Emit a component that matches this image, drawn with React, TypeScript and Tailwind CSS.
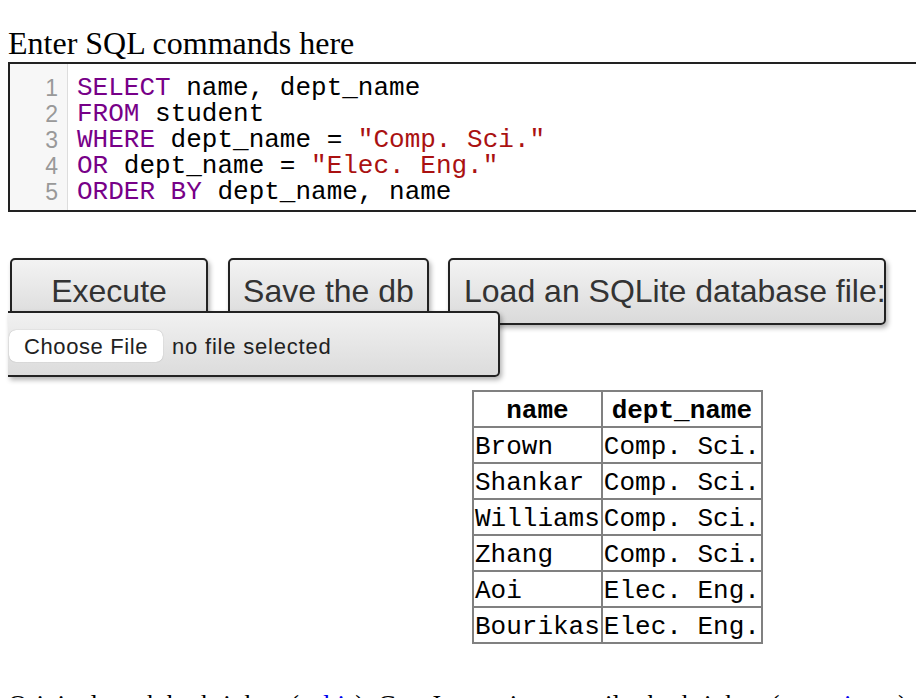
const SQL_LINES: { text: string; kind: 'kw' | 'str' | 'plain' }[][] = [
  [
    { text: 'SELECT', kind: 'kw' },
    { text: ' name, dept_name', kind: 'plain' },
  ],
  [
    { text: 'FROM', kind: 'kw' },
    { text: ' student', kind: 'plain' },
  ],
  [
    { text: 'WHERE', kind: 'kw' },
    { text: ' dept_name = ', kind: 'plain' },
    { text: '"Comp. Sci."', kind: 'str' },
  ],
  [
    { text: 'OR', kind: 'kw' },
    { text: ' dept_name = ', kind: 'plain' },
    { text: '"Elec. Eng."', kind: 'str' },
  ],
  [
    { text: 'ORDER BY', kind: 'kw' },
    { text: ' dept_name, name', kind: 'plain' },
  ],
];

const ROWS = [
  ['Brown', 'Comp. Sci.'],
  ['Shankar', 'Comp. Sci.'],
  ['Williams', 'Comp. Sci.'],
  ['Zhang', 'Comp. Sci.'],
  ['Aoi', 'Elec. Eng.'],
  ['Bourikas', 'Elec. Eng.'],
];

const tokenClass = {
  kw: 'text-[#770088]',
  str: 'text-[#aa1111]',
  plain: 'text-black',
};

const buttonClass =
  "border-2 border-[#222] rounded-[5px] bg-linear-to-b from-[#f3f3f3] to-[#dadada] text-[#333] text-[32px] leading-[37px] pt-[13px] pb-[13px] font-['Liberation_Sans',Arial,sans-serif] whitespace-nowrap overflow-hidden shadow-[2px_3px_5px_rgba(0,0,0,0.3)]";

function Editor() {
  return (
    <div className="mt-0 w-[960px] flex border-2 border-[#222] bg-white">
      {/* gouttière des numéros de ligne */}
      <div className="w-[58px] shrink-0 bg-[#f7f7f7] border-r border-[#dddddd] pt-[11px] pb-[5px] pr-[9px] text-right text-[#999] text-[23px] leading-[26px] font-['Liberation_Sans',Arial,sans-serif]">
        {SQL_LINES.map((_, i) => (
          <div key={i}>{i + 1}</div>
        ))}
      </div>
      <div className="pl-[9px] pt-[11px] pb-[5px] text-[26px] leading-[26px] font-['Liberation_Mono','Courier_New',monospace] whitespace-pre">
        {SQL_LINES.map((line, i) => (
          <div key={i}>
            {line.map((tok, j) => (
              <span key={j} className={tokenClass[tok.kind]}>
                {tok.text}
              </span>
            ))}
          </div>
        ))}
      </div>
    </div>
  );
}

function Toolbar() {
  return (
    <div className="mt-[46px]">
      <div className="flex items-start ml-[2px]">
        <button className={`${buttonClass} w-[198px] text-center`}>Execute</button>
        <button className={`${buttonClass} ml-[20px] w-[201px] text-center`}>Save the db</button>
        <label className={`${buttonClass} ml-[19px] w-[438px] pl-[14px] pr-0 block`}>
          Load an SQLite database file:
        </label>
      </div>
      <div className="relative z-10 -mt-[14px] w-[492px] h-[66px] pt-[4px] flex items-center border-2 border-l-0 border-[#222] rounded-r-[5px] bg-linear-to-b from-[#f1f1f1] to-[#dcdcdc] shadow-[2px_3px_5px_rgba(0,0,0,0.3)] font-['Liberation_Sans',Arial,sans-serif] text-[22px] text-[#222]">
        <span className="ml-[1px] w-[154px] h-[32px] flex items-center justify-center bg-white rounded-[7px] shadow-[0_0_1px_rgba(0,0,0,0.35)] tracking-[0.6px]">
          Choose File
        </span>
        <span className="ml-[9px] tracking-[0.8px]">no file selected</span>
      </div>
    </div>
  );
}

function ResultTable() {
  return (
    <table className="mt-[13px] ml-[464px] border-collapse border-2 border-[#808080] font-['Liberation_Mono','Courier_New',monospace] text-[26px] leading-[30px]">
      <thead>
        <tr>
          <th className="border-2 border-[#808080] px-[1px] pt-[4px] pb-0 text-center font-bold">name</th>
          <th className="border-2 border-[#808080] px-[1px] pt-[4px] pb-0 text-center font-bold">dept_name</th>
        </tr>
      </thead>
      <tbody>
        {ROWS.map(([name, dept]) => (
          <tr key={name}>
            <td className="border-2 border-[#808080] px-[1px] pt-[4px] pb-0">{name}</td>
            <td className="border-2 border-[#808080] px-[1px] pt-[4px] pb-0">{dept}</td>
          </tr>
        ))}
      </tbody>
    </table>
  );
}

export default function App() {
  return (
    <div className="w-full h-[698px] overflow-hidden bg-white px-2 pt-[25px] text-black font-['Liberation_Serif','Times_New_Roman',serif]">
      <h1 className="text-[32px] leading-[37px] font-normal">Enter SQL commands here</h1>
      <Editor />
      <Toolbar />
      <ResultTable />
      <footer className="mt-[46px] text-[27px] leading-[31px] whitespace-nowrap">
        Original work by kripken (<a className="text-[#0000ee] underline">sql.js</a>). C to Javascript
        compiler by kripken (<a className="text-[#0000ee] underline">emscripten</a>). Project now maintained by{' '}
        <a className="text-[#0000ee] underline">lovasoa</a>
      </footer>
    </div>
  );
}
